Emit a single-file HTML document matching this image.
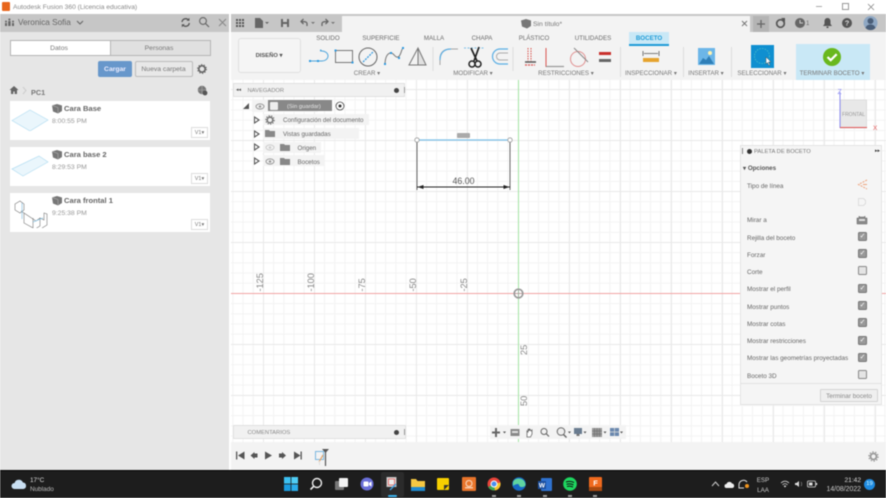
<!DOCTYPE html>
<html lang="es"><head><meta charset="utf-8"><title>Autodesk Fusion 360</title>
<style>
html,body{margin:0;padding:0;width:886px;height:498px;overflow:hidden;background:#fff}
body{font-family:"Liberation Sans",sans-serif;color:#666}
#root{position:absolute;left:0;top:0;width:886px;height:498px;overflow:hidden;filter:blur(.4px)}
.a{position:absolute}
.t{position:absolute;white-space:nowrap;line-height:1}
.c{transform:translateX(-50%)}
.rl{font-size:6.2px;color:#6a6a6a;top:36px}
.ll{font-size:6.2px;color:#777;top:70.5px}
.card{position:absolute;left:10px;width:200px;height:39px;background:#fff}
.card .n{position:absolute;left:54px;top:3px;font-size:7.6px;font-weight:bold;color:#666;white-space:nowrap}
.card .d{position:absolute;left:42px;top:17px;font-size:6.8px;color:#999}
.card .v{position:absolute;left:181px;top:26px;width:15px;height:9px;border:1px solid #ddd;font-size:5.5px;line-height:10px;color:#777;text-align:center}
.cube{position:absolute;left:42px;top:3px}
.tr{position:absolute;background:#f3f3f3;height:11px}
.tri{position:absolute;width:0;height:0;border-left:6px solid #555;border-top:4px solid transparent;border-bottom:4px solid transparent}
.tri:after{content:"";position:absolute;left:-5px;top:-2px;border-left:3px solid #fff;border-top:2px solid transparent;border-bottom:2px solid transparent}
.pl{position:absolute;left:747px;font-size:6.35px;color:#666;white-space:nowrap;line-height:1}
.cb{position:absolute;left:858px;width:7px;height:7px;border:1px solid #777;background:#999;border-radius:1.5px;color:#fff;font-size:7px;line-height:7px;text-align:center}
.cb.o{background:#e4e4e4;border-color:#888}
.grid{position:absolute;left:231px;top:80px;width:655px;height:362px;background-color:#fff;
background-image:linear-gradient(90deg,#e9e9e9 1px,transparent 1px),linear-gradient(#e9e9e9 1px,transparent 1px),linear-gradient(90deg,#f3f3f3 1px,transparent 1px),linear-gradient(#f3f3f3 1px,transparent 1px);
background-size:51px 51px,51px 51px,10.2px 10.2px,10.2px 10.2px;background-position:32px 9px,32px 9px,1.4px 9.2px,1.4px 9.2px}
</style></head><body><div id="root">

<!-- title bar -->
<div class="a" style="left:2px;top:2px;width:8px;height:9px;background:#e8661c;border-radius:1px"></div>
<div class="t" style="left:13px;top:4.5px;font-size:6.7px;color:#888">Autodesk Fusion 360 (Licencia educativa)</div>
<div class="a" style="left:816px;top:6px;width:6px;height:1px;background:#aaa"></div>
<div class="a" style="left:842px;top:3px;width:5px;height:5px;border:1px solid #999"></div>
<svg class="a" style="left:867px;top:3px" width="8" height="8"><path d="M1 1L7 7M7 1L1 7" stroke="#888" stroke-width=".8"/></svg>

<!-- left panel -->
<div class="a" style="left:0;top:14px;width:229px;height:18px;background:#c6c6c6"></div>
<div class="a" style="left:0;top:32px;width:229px;height:438px;background:#e6e6e6"></div>
<div class="a" style="left:229px;top:14px;width:2px;height:456px;background:#fff"></div>
<svg class="a" style="left:4px;top:18px" width="11" height="9"><path d="M1 8V5h2v3zM4.200 8V3h2.400v5zM8 8V5h2v3z" fill="#666"/><circle cx="2" cy="3.500" r="1" fill="#666"/><circle cx="5.400" cy="1.500" r="1.100" fill="#666"/><circle cx="9" cy="3.500" r="1" fill="#666"/></svg>
<div class="t" style="left:18px;top:18.500px;font-size:8.200px;color:#666">Veronica Sofia</div>
<svg class="a" style="left:76px;top:20px" width="8" height="6"><path d="M1 1l3 3 3-3" fill="none" stroke="#666" stroke-width="1.100"/></svg>
<svg class="a" style="left:180px;top:17px" width="11" height="11"><path d="M2 5a3.700 3.700 0 0 1 6.500-2M9.300 6a3.700 3.700 0 0 1-6.500 2" fill="none" stroke="#555" stroke-width="1.300"/><path d="M9.500 .8v3h-3zM1.800 10.200v-3h3z" fill="#555"/></svg>
<svg class="a" style="left:198px;top:16px" width="12" height="12"><circle cx="5" cy="5" r="3.400" fill="none" stroke="#666" stroke-width="1.100"/><path d="M7.500 7.500L11 11" stroke="#666" stroke-width="1.200"/></svg>
<svg class="a" style="left:218px;top:18px" width="9" height="9"><path d="M1 1l7 7M8 1L1 8" stroke="#888" stroke-width="1"/></svg>

<div class="a" style="left:10px;top:40px;width:99px;height:14px;background:#fff;border:1px solid #b5b5b5"></div>
<div class="a" style="left:110px;top:40px;width:99px;height:14px;background:#e0e0e0;border:1px solid #b5b5b5"></div>
<div class="t c" style="left:59px;top:46px;font-size:6.800px;color:#777">Datos</div>
<div class="t c" style="left:159px;top:46px;font-size:6.800px;color:#777">Personas</div>
<div class="a" style="left:98px;top:61px;width:34px;height:16px;background:#6797cb;border-radius:2px"></div>
<div class="t c" style="left:115px;top:67px;font-size:6.800px;color:#eef;font-weight:bold">Cargar</div>
<div class="a" style="left:135px;top:61px;width:56px;height:14px;background:#e8e8e8;border:1px solid #bbb;border-radius:2px"></div>
<div class="t c" style="left:163.500px;top:67px;font-size:6.800px;color:#777">Nueva carpeta</div>
<svg class="a" style="left:197px;top:64px" width="10" height="10"><circle cx="5" cy="5" r="3.200" fill="none" stroke="#666" stroke-width="1.700"/><circle cx="5" cy="5" r="4.400" fill="none" stroke="#666" stroke-width="1" stroke-dasharray="1.300 1.500"/></svg>
<svg class="a" style="left:9px;top:85px" width="10" height="10"><path d="M5 1L.5 5H2v4h2.300V6.500h1.400V9H8V5h1.500z" fill="#666"/></svg>
<svg class="a" style="left:22px;top:86px" width="6" height="9"><path d="M1 1l3 3.500-3 3.500" fill="none" stroke="#ccc"/></svg>
<div class="t" style="left:31px;top:88.500px;font-size:7.300px;font-weight:bold;color:#777">PC1</div>
<svg class="a" style="left:197px;top:85px" width="11" height="11"><circle cx="5" cy="5" r="4.200" fill="#777"/><path d="M5 1v8M1 5h8" stroke="#aaa" stroke-width=".6"/><circle cx="8" cy="8" r="2.400" fill="#555"/></svg>

<div class="card" style="top:101px">
 <svg style="position:absolute;left:1px;top:6px" width="38" height="24"><path d="M1 13.500L19 3l18 10-18 11z" fill="#eaf6fc" stroke="#b5def2" stroke-width=".7"/></svg>
 <svg class="cube" width="11" height="10"><path d="M0 1.500L5 0l5 1.500V7L6 9.500 1 7.500z" fill="#777"/><path d="M0 1.500L6 3.500v6" fill="none" stroke="#bbb" stroke-width=".5"/></svg><div class="n">Cara Base</div><div class="d">8:00:55 PM</div><div class="v">V1▾</div>
</div>
<div class="card" style="top:147px">
 <svg style="position:absolute;left:1px;top:6px" width="38" height="24"><path d="M1 16L28 3l9 6-25 14z" fill="#eaf6fc" stroke="#b5def2" stroke-width=".7"/></svg>
 <svg class="cube" width="11" height="10"><path d="M0 1.500L5 0l5 1.500V7L6 9.500 1 7.500z" fill="#777"/><path d="M0 1.500L6 3.500v6" fill="none" stroke="#bbb" stroke-width=".5"/></svg><div class="n">Cara base 2</div><div class="d">8:29:53 PM</div><div class="v">V1▾</div>
</div>
<div class="card" style="top:193px">
 <svg style="position:absolute;left:3px;top:5px" width="36" height="30"><path d="M2 6l5-3 4 3v6l-4 3-5-3zM8 13l3 2v10l11 6 5-3V20l4 2v-7l3 1v11l-5 3M11 15l12 8 4-3M20 20v10" fill="none" stroke="#777" stroke-width=".6"/><path d="M9 5v16M20 24l10-4" fill="none" stroke="#8cc4e4" stroke-width=".7"/></svg>
 <svg class="cube" width="11" height="10"><path d="M0 1.500L5 0l5 1.500V7L6 9.500 1 7.500z" fill="#777"/><path d="M0 1.500L6 3.500v6" fill="none" stroke="#bbb" stroke-width=".5"/></svg><div class="n">Cara frontal 1</div><div class="d">9:25:38 PM</div><div class="v">V1▾</div>
</div>

<!-- top bar -->
<div class="a" style="left:231px;top:14px;width:655px;height:2px;background:#c6c6c6"></div>
<div class="a" style="left:231px;top:15px;width:111px;height:17px;background:#c6c6c6"></div>
<div class="a" style="left:750px;top:15px;width:136px;height:17px;background:#c6c6c6"></div>
<div class="a" style="left:342px;top:16px;width:408px;height:17px;background:#f3f3f3"></div>
<div class="a" style="left:231px;top:32px;width:655px;height:48px;background:#f3f3f3"></div>
<svg class="a" style="left:235px;top:18px" width="10" height="10"><path d="M1 1h2v2H1zM4 1h2v2H4zM7 1h2v2H7zM1 4h2v2H1zM4 4h2v2H4zM7 4h2v2H7zM1 7h2v2H1zM4 7h2v2H4zM7 7h2v2H7z" fill="#555"/></svg>
<svg class="a" style="left:254px;top:17px" width="16" height="12"><path d="M1 1h5l3 3v7H1z" fill="#666"/><path d="M11 5h4l-2 2z" fill="#666"/></svg>
<svg class="a" style="left:280px;top:18px" width="10" height="10"><path d="M1 1h8v8H1z" fill="#666"/><path d="M3 1h4v3H3zM3 6h4v3H3z" fill="#ccc"/></svg>
<svg class="a" style="left:299px;top:18px" width="16" height="10"><path d="M8 8V5.500C8 4 6 3.500 3 3.500M4.500 1L2 3.500 4.500 6" fill="none" stroke="#666" stroke-width="1.300"/><path d="M12 4h4l-2 2z" fill="#777"/></svg>
<svg class="a" style="left:320px;top:18px" width="16" height="10"><path d="M2 8V5.500C2 4 4 3.500 7 3.500M5.500 1L8 3.500 5.500 6" fill="none" stroke="#666" stroke-width="1.300"/><path d="M11 4h4l-2 2z" fill="#777"/></svg>
<svg class="a" style="left:521px;top:19px" width="11" height="10"><path d="M0 1.500L5 0l5 1.500V7L6 9.500 1 7.500z" fill="#777"/></svg>
<div class="t" style="left:533px;top:21.500px;font-size:6.800px;color:#777">Sin título*</div>
<svg class="a" style="left:741px;top:20px" width="7" height="7"><path d="M1 1l5 5M6 1L1 6" stroke="#777"/></svg>
<div class="a" style="left:753px;top:16px;width:16px;height:16px;background:#b4b4b4"></div>
<svg class="a" style="left:756px;top:19px" width="10" height="10"><path d="M5 1v8M1 5h8" stroke="#666" stroke-width="1.300"/></svg>
<svg class="a" style="left:775px;top:18px" width="11" height="11"><circle cx="5.500" cy="5.500" r="3.800" fill="none" stroke="#555" stroke-width="1.700"/><path d="M6 0h4v4z" fill="#555"/></svg>
<svg class="a" style="left:794px;top:17px" width="12" height="12"><circle cx="6" cy="6" r="5" fill="#666"/><path d="M6 3v3h3" fill="none" stroke="#ccc"/></svg>
<div class="t" style="left:806px;top:21px;font-size:6px;color:#666">1</div>
<svg class="a" style="left:822px;top:17px" width="11" height="12"><path d="M5.500 1c2 0 3 1.500 3 3.500V7l1.500 2H1l1.500-2V4.500C2.500 2.500 3.500 1 5.500 1z" fill="#555"/><rect x="4.500" y="9.500" width="2" height="1.500" fill="#555"/></svg>
<svg class="a" style="left:841px;top:17px" width="12" height="12"><circle cx="6" cy="6" r="5" fill="#555"/><text x="6" y="8.500" font-size="7.500" font-weight="bold" fill="#ddd" text-anchor="middle" font-family="Liberation Sans">?</text></svg>
<svg class="a" style="left:863px;top:15px" width="15" height="16"><circle cx="7.500" cy="8" r="7" fill="#8fa8c4"/><circle cx="7.500" cy="6" r="3" fill="#4a5e78"/><path d="M2.500 13c1-3 3-3.500 5-3.500s4 .5 5 3.500a7 7 0 0 1-10 0z" fill="#4a5e78"/></svg>

<!-- tabs -->
<div class="t c rl" style="left:328px">SOLIDO</div>
<div class="t c rl" style="left:381px">SUPERFICIE</div>
<div class="t c rl" style="left:434px">MALLA</div>
<div class="t c rl" style="left:482px">CHAPA</div>
<div class="t c rl" style="left:534px">PLÁSTICO</div>
<div class="t c rl" style="left:593px">UTILIDADES</div>
<div class="a" style="left:629px;top:32px;width:40px;height:14px;background:#c9e8f6;border-bottom:2px solid #1e9bd7;box-sizing:border-box"></div>
<div class="t c rl" style="left:649px;color:#1e9bd7;font-weight:bold">BOCETO</div>

<!-- Design box -->
<div class="a" style="left:238px;top:38px;width:61px;height:33px;background:#f5f5f5;border:1px solid #e0e0e0;border-radius:3px"></div>
<div class="t c" style="left:269px;top:53.500px;font-size:5.800px;font-weight:bold;color:#555">DISEÑO ▾</div>

<!-- Ribbon icons -->
<svg class="a" style="left:306px;top:44px" width="316" height="30" fill="none">
 <path d="M4 17H16c3 0 6-2 6-5s-3-5-6-5h-1" stroke="#4da5dc" stroke-width="1"/>
 <path d="M14 6.500h1.500" stroke="#4da5dc" stroke-width="1.800"/><rect x="3" y="16" width="2" height="2" fill="#2f9ae0"/><rect x="11" y="16" width="2" height="2" fill="#2f9ae0"/>
 <rect x="29.500" y="6.500" width="17" height="12" stroke="#777" stroke-width="1"/>
 <rect x="28.500" y="5.500" width="2" height="2" fill="#2f9ae0"/><rect x="45.500" y="17.500" width="2" height="2" fill="#2f9ae0"/>
 <circle cx="62" cy="13" r="9" stroke="#666" stroke-width="1"/>
 <path d="M57 18l10-10" stroke="#3f9fe0" stroke-width="1.300" stroke-dasharray="2 1"/>
 <path d="M79 21c0-9 3-12 6-12s4 5 7 4 3-7 5-9" stroke="#777" stroke-width="1"/>
 <rect x="78" y="19" width="2" height="2" fill="#2f9ae0"/><rect x="84" y="8" width="2" height="2" fill="#2f9ae0"/><rect x="92" y="13" width="2" height="2" fill="#2f9ae0"/><rect x="96" y="3" width="2" height="2" fill="#2f9ae0"/>
 <path d="M112 4l8 17h-8z" fill="#e0e0e0"/>
 <path d="M103 21L112 4l8 17zM112 4v17" stroke="#777" stroke-width="1"/>
 <path d="M127 3v24" stroke="#ddd"/>
 <path d="M134 21v-6c0-7 4-10 11-10h7" stroke="#a5a5a5" stroke-width="1"/>
 <path d="M134 16c0-7 4-11 11-11" stroke="#5aaee4" stroke-width="1.200"/>
 <path d="M158 4h20" stroke="#7cc0e8" stroke-width="1" stroke-dasharray="2 1.500"/>
 <path d="M165 4l6 13M173 3l-5 14" stroke="#222" stroke-width="1.700"/>
 <circle cx="166" cy="20" r="3" stroke="#222" stroke-width="1.500"/><circle cx="172" cy="20" r="3" stroke="#222" stroke-width="1.500"/>
 <path d="M202 5h-8a7.500 7.500 0 0 0 0 15h8" stroke="#5aaee4" stroke-width="1.200"/>
 <path d="M202 9h-8a3.500 3.500 0 0 0 0 7h8" stroke="#aaa" stroke-width="1"/>
 <path d="M207 3v24" stroke="#ddd"/>
 <path d="M222 4v13M225 4v13" stroke="#d9534f" stroke-width="1" stroke-dasharray="1.500 1"/>
 <path d="M219 18h11" stroke="#555" stroke-width="1.500"/>
 <path d="M219 21h10" stroke="#d9534f" stroke-width="1.200" stroke-dasharray="2 1"/>
 <path d="M240 4v19" stroke="#d9534f" stroke-width="1"/><path d="M240 22.500h18" stroke="#999" stroke-width="1.300"/>
 <circle cx="272" cy="15" r="7.500" stroke="#e08f8f" stroke-width="1"/><path d="M268 4l14 14" stroke="#888" stroke-width="1"/>
 <rect x="293" y="8" width="12" height="3" fill="#c9302c"/><rect x="293" y="15" width="12" height="3" fill="#666"/>
</svg>
<div class="a" style="left:619.500px;top:47px;width:1px;height:30px;background:#ddd"></div>
<div class="a" style="left:682.500px;top:47px;width:1px;height:30px;background:#ddd"></div>
<div class="a" style="left:730.500px;top:47px;width:1px;height:30px;background:#ddd"></div>
<svg class="a" style="left:642px;top:50px" width="18" height="13" fill="none"><path d="M1 1v5M17 1v5M2 3.500h14" stroke="#555" stroke-width=".8"/><rect x="1" y="8" width="16" height="4" fill="#e6a32e"/></svg>
<svg class="a" style="left:698px;top:48px" width="18" height="17"><rect width="17" height="17" fill="#6cb6e8"/><path d="M1 16l4-6 3 2 3-4 5 8z" fill="#2f7fb8"/><circle cx="12" cy="5" r="2" fill="#fff2b0"/></svg>
<div class="a" style="left:751px;top:45px;width:23px;height:23px;background:#0f8fd0"></div>
<svg class="a" style="left:751px;top:45px" width="23" height="23" fill="none"><circle cx="11" cy="11" r="7.500" stroke="#4cc0c8" stroke-dasharray="1.500 1.200" stroke-width=".8"/><path d="M15 12v7l1.500-1.500 1.500 3 1-.5-1.500-3H20z" fill="#fff" stroke="#333" stroke-width=".4"/></svg>
<div class="a" style="left:796px;top:44px;width:74px;height:36px;background:#c9e8f6"></div>
<svg class="a" style="left:823px;top:48px" width="18" height="18"><circle cx="9" cy="9" r="9" fill="#69b81e"/><path d="M4.500 9l3.200 3.200 6-6" fill="none" stroke="#fff" stroke-width="2.200"/></svg>

<div class="t c ll" style="left:367px">CREAR ▾</div>
<div class="t c ll" style="left:473px">MODIFICAR ▾</div>
<div class="t c ll" style="left:566px">RESTRICCIONES ▾</div>
<div class="t c ll" style="left:651px">INSPECCIONAR ▾</div>
<div class="t c ll" style="left:706px">INSERTAR ▾</div>
<div class="t c ll" style="left:762px">SELECCIONAR ▾</div>
<div class="t c ll" style="left:832px">TERMINAR BOCETO ▾</div>

<!-- canvas grid -->
<div class="grid"></div>
<div class="a" style="left:231px;top:293px;width:655px;height:1px;background:#f2a4a4"></div>
<div class="a" style="left:518px;top:80px;width:1px;height:362px;background:#a6e6a6"></div>
<svg class="a" style="left:513px;top:288px" width="11" height="11"><circle cx="5.500" cy="5.500" r="4.300" fill="none" stroke="#999" stroke-width="1.700"/><path d="M5.500 1v9M1 5.500h9" stroke="#999" stroke-width=".6"/></svg>

<!-- axis labels -->
<svg class="a" style="left:231px;top:230px" width="320" height="190" font-family="Liberation Sans" font-size="9.200" fill="#888">
 <text transform="translate(32 61.500) rotate(-90)">-125</text>
 <text transform="translate(83 61.500) rotate(-90)">-100</text>
 <text transform="translate(134 61.500) rotate(-90)">-75</text>
 <text transform="translate(185 61.500) rotate(-90)">-50</text>
 <text transform="translate(236 61.500) rotate(-90)">-25</text>
 <text transform="translate(296 125) rotate(-90)">25</text>
 <text transform="translate(296 176) rotate(-90)">50</text>
</svg>

<!-- sketch -->
<svg class="a" style="left:400px;top:125px" width="125" height="75" fill="none">
 <path d="M17 15h93" stroke="#7cc0e8" stroke-width="1.200"/>
 <path d="M17 15v50M110 15v50" stroke="#666" stroke-width="1"/>
 <path d="M17 62h93" stroke="#222" stroke-width="1"/>
 <path d="M17.500 62l6-2v4zM109.500 62l-6-2v4z" fill="#222"/>
 <circle cx="17" cy="15" r="2.200" fill="#fff" stroke="#999" stroke-width=".8"/>
 <circle cx="110" cy="15" r="2.200" fill="#fff" stroke="#999" stroke-width=".8"/>
 <rect x="57" y="8" width="13" height="5" rx="1" fill="#aaa"/>
 <text x="63.500" y="59" font-size="8.800" fill="#555" text-anchor="middle" font-family="Liberation Sans">46.00</text>
</svg>

<!-- navigator -->
<div class="a" style="left:233px;top:83px;width:172px;height:14px;background:#f1f1f1;border:1px solid #e0e0e0;box-sizing:border-box"></div>
<div class="t" style="left:236px;top:88px;font-size:5px;color:#555">◂◂</div>
<div class="t" style="left:247.500px;top:88.500px;font-size:5.800px;color:#888">NAVEGADOR</div>
<div class="a" style="left:394px;top:88px;width:5px;height:5px;border-radius:50%;background:#444"></div>
<div class="a" style="left:404px;top:87px;width:1px;height:6px;background:#999"></div>
<svg class="a" style="left:242px;top:102px" width="8" height="8"><path d="M7 1v6H1z" fill="#555"/></svg>
<div class="a" style="left:252px;top:100px;width:66px;height:12px;background:#f3f3f3"></div>
<svg class="a" style="left:255px;top:103px" width="10" height="7"><ellipse cx="5" cy="3.500" rx="4" ry="2.600" fill="none" stroke="#999"/><circle cx="5" cy="3.500" r="1.300" fill="#999"/></svg>
<div class="a" style="left:268px;top:100px;width:64px;height:11px;background:#888"></div>
<div class="a" style="left:270px;top:101.500px;width:8px;height:8px;background:#eee;border-radius:1px"></div>
<div class="t" style="left:287px;top:105px;font-size:5.800px;color:#e8e8e8">(Sin guardar)</div>
<svg class="a" style="left:335px;top:101px" width="10" height="10"><circle cx="5" cy="5" r="4" fill="#fff" stroke="#444" stroke-width=".8"/><circle cx="5" cy="5" r="1.500" fill="#333"/></svg>

<div class="tr" style="left:263px;top:114px;width:106px"></div>
<div class="tr" style="left:263px;top:128px;width:96px"></div>
<div class="tr" style="left:263px;top:142px;width:58px"></div>
<div class="tr" style="left:263px;top:155px;width:62px"></div>
<div class="tri" style="left:254px;top:116px"></div>
<div class="tri" style="left:254px;top:130px"></div>
<div class="tri" style="left:254px;top:143px"></div>
<div class="tri" style="left:254px;top:157px"></div>
<svg class="a" style="left:265px;top:115px" width="10" height="10"><circle cx="5" cy="5" r="2.800" fill="none" stroke="#777" stroke-width="1.600"/><circle cx="5" cy="5" r="4.200" fill="none" stroke="#777" stroke-width="1.100" stroke-dasharray="1.300 1.300"/></svg>
<svg class="a" style="left:265px;top:129px" width="10" height="9"><path d="M0 1h4l1 1h5v6H0z" fill="#888"/></svg>
<svg class="a" style="left:265px;top:144px" width="10" height="7"><ellipse cx="5" cy="3.500" rx="4" ry="2.600" fill="none" stroke="#ccc"/><circle cx="5" cy="3.500" r="1.300" fill="#ccc"/></svg>
<svg class="a" style="left:280px;top:143px" width="10" height="9"><path d="M0 1h4l1 1h5v6H0z" fill="#888"/></svg>
<svg class="a" style="left:265px;top:158px" width="10" height="7"><ellipse cx="5" cy="3.500" rx="4" ry="2.600" fill="none" stroke="#999"/><circle cx="5" cy="3.500" r="1.300" fill="#999"/></svg>
<svg class="a" style="left:280px;top:157px" width="10" height="9"><path d="M0 1h4l1 1h5v6H0z" fill="#888"/></svg>
<div class="t" style="left:283px;top:118px;font-size:6.200px;color:#666">Configuración del documento</div>
<div class="t" style="left:283px;top:132px;font-size:6.200px;color:#666">Vistas guardadas</div>
<div class="t" style="left:297.500px;top:146px;font-size:6.200px;color:#666">Origen</div>
<div class="t" style="left:297.500px;top:159.500px;font-size:6.200px;color:#666">Bocetos</div>

<!-- view cube -->
<svg class="a" style="left:832px;top:85px" width="54" height="50" font-family="Liberation Sans">
 <rect x="8.500" y="15" width="26" height="28" fill="#e8e8e8" stroke="#ddd"/>
 <path d="M8 43V7" stroke="#8c8cf0" stroke-width="1"/><path d="M8 42.500h27" stroke="#e45a5a" stroke-width="1"/>
 <text x="5.500" y="9" font-size="7" fill="#8c8cf0">Z</text>
 <text x="41" y="45" font-size="6.500" fill="#e45a5a">X</text>
 <text x="21.500" y="31" font-size="5" fill="#999" text-anchor="middle">FRONTAL</text>
</svg>

<!-- palette -->
<div class="a" style="left:740px;top:145px;width:142px;height:260px;background:#f5f5f5;border:1px solid #e4e4e4;box-sizing:border-box"></div>
<div class="a" style="left:741.500px;top:148px;width:1px;height:6px;background:#888"></div>
<div class="a" style="left:747px;top:149px;width:5px;height:5px;background:#333;border-radius:50%"></div>
<div class="t" style="left:754px;top:149.500px;font-size:5.800px;color:#777">PALETA DE BOCETO</div>
<div class="t" style="left:875px;top:149px;font-size:5px;color:#333">▸▸</div>
<div class="t" style="left:743px;top:166px;font-size:6.200px;color:#555;font-weight:bold">▾ Opciones</div>
<div class="pl" style="top:183.500px">Tipo de línea</div>
<div class="pl" style="top:217.500px">Mirar a</div>
<div class="pl" style="top:235.500px">Rejilla del boceto</div>
<div class="pl" style="top:252.500px">Forzar</div>
<div class="pl" style="top:269.500px">Corte</div>
<div class="pl" style="top:286.500px">Mostrar el perfil</div>
<div class="pl" style="top:304.500px">Mostrar puntos</div>
<div class="pl" style="top:321.500px">Mostrar cotas</div>
<div class="pl" style="top:338.500px">Mostrar restricciones</div>
<div class="pl" style="top:356px">Mostrar las geometrías proyectadas</div>
<div class="pl" style="top:373.500px">Boceto 3D</div>
<svg class="a" style="left:857px;top:179px" width="11" height="12" fill="none"><path d="M10 1L1.500 5.500 10 10" stroke="#eea27a" stroke-dasharray="2 1" stroke-width="1"/><path d="M6 5.500h4" stroke="#eea27a"/></svg>
<svg class="a" style="left:857px;top:197px" width="10" height="10" fill="none"><path d="M1.500 1.500h5l2 2v3l-2 2h-5z" stroke="#ddd"/></svg>
<svg class="a" style="left:856px;top:214px" width="12" height="11"><path d="M1 4h2V2l1 1h4l1-1v2h2v6H1z" fill="#888" stroke="#666" stroke-width=".5"/><rect x="3" y="5" width="6" height="2" fill="#ddd"/></svg>
<div class="cb" style="top:232px">✓</div>
<div class="cb" style="top:249px">✓</div>
<div class="cb o" style="top:266px"></div>
<div class="cb" style="top:284px">✓</div>
<div class="cb" style="top:301px">✓</div>
<div class="cb" style="top:318px">✓</div>
<div class="cb" style="top:336px">✓</div>
<div class="cb" style="top:353px">✓</div>
<div class="cb o" style="top:370px"></div>
<div class="a" style="left:741px;top:383px;width:140px;height:1px;background:#e2e2e2"></div>
<div class="a" style="left:820px;top:389px;width:56px;height:11px;background:#efefef;border:1px solid #d4d4d4;border-radius:1px"></div>
<div class="t c" style="left:849px;top:393.500px;font-size:6.400px;color:#888">Terminar boceto</div>

<!-- comments -->
<div class="a" style="left:233px;top:425px;width:173px;height:14px;background:#f1f1f1;border:1px solid #e0e0e0;box-sizing:border-box"></div>
<div class="t" style="left:247.500px;top:431px;font-size:5.800px;color:#888">COMENTARIOS</div>
<div class="a" style="left:394px;top:429.500px;width:5px;height:5px;border-radius:50%;background:#444"></div>
<div class="a" style="left:404px;top:429px;width:1px;height:6px;background:#999"></div>

<!-- nav bar -->
<div class="a" style="left:490px;top:425px;width:136px;height:14px;background:#f3f3f3"></div>
<svg class="a" style="left:490px;top:425px" width="136" height="14">
 <path d="M6 3v9M2 7.500h8" stroke="#666" stroke-width="2"/><path d="M13 6.500h3l-1.500 2z" fill="#555"/>
 <rect x="20.500" y="4" width="9" height="7" fill="#888"/><rect x="22" y="6" width="6" height="2" fill="#ddd"/>
 <path d="M37 12V6l1 1V4l1 2V3.500l1 2V4l1 2 1-1v4l-1.500 3z" fill="#fff" stroke="#666" stroke-width=".8"/>
 <circle cx="54" cy="6.500" r="3" fill="none" stroke="#666"/><path d="M56 8.500l3 3" stroke="#666" stroke-width="1.200"/>
 <circle cx="71" cy="6.500" r="3.800" fill="#eee" stroke="#666"/><path d="M73.500 9.500l3 3" stroke="#666" stroke-width="1.400"/><path d="M78 6.500h3l-1.500 2z" fill="#555"/>
 <rect x="84" y="3" width="8" height="6" fill="#6a7c90"/><rect x="86.500" y="9" width="3" height="2" fill="#777"/><path d="M93.500 6.500h3l-1.500 2z" fill="#555"/>
 <rect x="102" y="3" width="10" height="9" fill="#999"/><path d="M104.500 3v9M107 3v9M109.500 3v9M102 6h10M102 9h10" stroke="#666" stroke-width=".5"/><path d="M113.500 6.500h3l-1.500 2z" fill="#555"/>
 <rect x="120" y="3" width="9" height="8" fill="#6a88ae"/><path d="M124.500 3v8M120 7h9" stroke="#ddd" stroke-width=".7"/><path d="M130 6.500h3l-1.500 2z" fill="#555"/>
</svg>

<!-- timeline -->
<div class="a" style="left:231px;top:442px;width:655px;height:28px;background:#f3f3f3"></div>
<svg class="a" style="left:235px;top:450px" width="70" height="12" fill="#555">
 <path d="M1 1.500h1.300v8H1zM9.500 1.500v8L3 5.500z"/>
 <path d="M15.500 5.500l4-3.500v7zM19.500 3.500h3v4h-3z"/>
 <path d="M30 1.500l7 4-7 4z"/>
 <path d="M44 3.500h3V2l4 3.500-4 3.500V7.500h-3z"/>
 <path d="M59 1.500l6.500 4-6.500 4zM65.500 1.500h1.300v8h-1.300z"/>
</svg>
<svg class="a" style="left:314px;top:447px" width="18" height="20" fill="none">
 <rect x="1.500" y="4.500" width="8" height="8" stroke="#7cb8e0" stroke-width="1"/>
 <path d="M5 15l4-7" stroke="#e6a060" stroke-width="1.200"/>
 <path d="M8 2h7l-3.500 4z" fill="#555"/><path d="M11.500 4v15" stroke="#555" stroke-width="1.200"/>
 <path d="M5.500 14v4" stroke="#ddd"/>
</svg>
<svg class="a" style="left:868px;top:451px" width="11" height="11"><circle cx="5.500" cy="5.500" r="3" fill="none" stroke="#999" stroke-width="1.800"/><circle cx="5.500" cy="5.500" r="4.600" fill="none" stroke="#999" stroke-width="1.200" stroke-dasharray="1.400 1.500"/></svg>

<!-- taskbar -->
<div class="a" style="left:0;top:470px;width:886px;height:1px;background:#000"></div>
<div class="a" style="left:0;top:471px;width:886px;height:27px;background:#1d1d1d"></div>
<svg class="a" style="left:11px;top:478px" width="16" height="12"><path d="M3.500 11a3 3 0 0 1 0-6 4.500 4.500 0 0 1 8.500-.5A3.300 3.300 0 0 1 12.500 11z" fill="#c9dff2"/></svg>
<div class="t" style="left:30px;top:478px;font-size:6.400px;color:#ddd">17°C</div>
<div class="t" style="left:30px;top:487px;font-size:6.400px;color:#bbb">Nublado</div>

<svg class="a" style="left:284px;top:477px" width="14" height="14"><rect width="6.600" height="6.600" fill="#3cc1f2"/><rect x="7.400" width="6.600" height="6.600" fill="#4fcdf5"/><rect y="7.400" width="6.600" height="6.600" fill="#1a9ce0"/><rect x="7.400" y="7.400" width="6.600" height="6.600" fill="#2badeb"/></svg>
<svg class="a" style="left:309px;top:477px" width="14" height="14" fill="none"><circle cx="8" cy="6" r="4.500" stroke="#eee" stroke-width="1.400"/><path d="M4.500 9.500L1.500 12.500" stroke="#eee" stroke-width="1.600"/></svg>
<svg class="a" style="left:335px;top:477px" width="14" height="14"><rect x="0" y="4" width="9" height="9" rx="1" fill="#777"/><rect x="4" y="1" width="9" height="9" rx="1" fill="#f2f2f2"/></svg>
<svg class="a" style="left:360px;top:477px" width="14" height="14"><circle cx="7" cy="7" r="6.500" fill="#6a6fd8"/><rect x="3.500" y="4.500" width="5" height="5" rx="1" fill="#fff"/><path d="M9 6l2.500-1.500v5L9 8z" fill="#fff"/></svg>
<div class="a" style="left:381px;top:472px;width:23px;height:25px;background:#2b2b2b;border-radius:2px"></div>
<svg class="a" style="left:386px;top:477px" width="14" height="15" fill="none"><rect x="1" y=".5" width="9" height="9" fill="#eee" stroke="#bbb"/><rect x="2.500" y="2" width="6" height="6" stroke="#d9534f" stroke-width=".8"/><path d="M4 13l6-6" stroke="#3f9fe0" stroke-width="1.300"/></svg>
<div class="a" style="left:388px;top:494.500px;width:9px;height:2px;background:#3cb4f0;border-radius:1px"></div>
<svg class="a" style="left:411px;top:478px" width="14" height="13"><path d="M0 1h5l1.500 2H14v10H0z" fill="#f5c842"/><rect y="9" width="14" height="4" fill="#1f8ad0"/></svg>
<svg class="a" style="left:437px;top:478px" width="12" height="12"><rect width="12" height="12" rx="1" fill="#f7d000"/><path d="M7 12l5-5H7z" fill="#333"/></svg>
<svg class="a" style="left:462px;top:477px" width="14" height="14"><rect width="14" height="14" rx="1" fill="#e8742a"/><circle cx="7" cy="6.500" r="3" fill="none" stroke="#f7c9a8" stroke-width="1.300"/><rect x="3" y="10" width="8" height="1.500" fill="#f7c9a8"/></svg>
<svg class="a" style="left:487px;top:477px" width="14" height="14"><circle cx="7" cy="7" r="6.500" fill="#e8443a"/><path d="M7 7L1.200 10A6.500 6.500 0 0 0 8 13.400z" fill="#3aa757"/><path d="M7 7l1 6.400A6.500 6.500 0 0 0 13.400 5.500z" fill="#f7c52e"/><circle cx="7" cy="7" r="3" fill="#4a8ef0" stroke="#fff"/></svg>
<svg class="a" style="left:512px;top:477px" width="14" height="14"><circle cx="7" cy="7" r="6.800" fill="#1668c4"/><path d="M1 5c2-5 11-5 12.500 2 .3 2-1.500 3-4 3-3 0-2-3-3.500-3-2 0-4 1-5 2z" fill="#5fd4a0"/></svg>
<svg class="a" style="left:538px;top:478px" width="14" height="13"><rect x="3" y="0" width="11" height="13" rx="1" fill="#2f72d0"/><rect x="0" y="3" width="8" height="8" fill="#1c4f9e"/><text x="4" y="9.500" font-size="6.500" font-weight="bold" fill="#fff" text-anchor="middle" font-family="Liberation Sans">W</text></svg>
<svg class="a" style="left:563px;top:477px" width="14" height="14" fill="none"><circle cx="7" cy="7" r="6.800" fill="#1ed760"/><path d="M3 5c3-1 6-.7 8 .6M3.500 7.300c2.500-.8 5-.5 7 .6M4 9.500c2-.6 4-.4 6 .5" stroke="#111" stroke-width="1"/></svg>
<svg class="a" style="left:589px;top:477px" width="13" height="14"><rect width="13" height="14" rx="1" fill="#f06a1e"/><rect y="10" width="13" height="4" fill="#a84a10"/><text x="6.500" y="8.500" font-size="7.500" font-weight="bold" fill="#fff" text-anchor="middle" font-family="Liberation Sans">F</text></svg>
<div class="a" style="left:492px;top:495px;width:4px;height:1.500px;background:#999"></div>
<div class="a" style="left:517px;top:495px;width:4px;height:1.500px;background:#999"></div>
<div class="a" style="left:543px;top:495px;width:4px;height:1.500px;background:#999"></div>
<div class="a" style="left:568px;top:495px;width:4px;height:1.500px;background:#999"></div>
<div class="a" style="left:593px;top:495px;width:4px;height:1.500px;background:#999"></div>

<svg class="a" style="left:711px;top:481px" width="9" height="6" fill="none"><path d="M1 5l3.500-4L8 5" stroke="#ccc"/></svg>
<svg class="a" style="left:724px;top:481px" width="11" height="7"><path d="M2.500 7a2 2 0 0 1 0-4 3 3 0 0 1 5.500-.5A2.300 2.300 0 0 1 8.500 7z" fill="#eee"/></svg>
<svg class="a" style="left:737px;top:477px" width="13" height="13" fill="none"><path d="M2 8a4.500 4.500 0 0 1 8-3" stroke="#ddd" stroke-width="1"/><path d="M2 8v3h5" stroke="#ddd"/><circle cx="10" cy="9" r="2" fill="#f0951e"/></svg>
<div class="t c" style="left:763px;top:478px;font-size:6.200px;color:#ccc">ESP</div>
<div class="t c" style="left:763px;top:487.500px;font-size:6.200px;color:#ccc">LAA</div>
<svg class="a" style="left:780px;top:480px" width="10" height="8" fill="none"><path d="M1 3c2.500-2.500 5.500-2.500 8 0M2.500 4.800c1.600-1.500 3.400-1.500 5 0" stroke="#ddd" stroke-width=".8"/><path d="M5 7.500L3.700 6c.8-.6 1.800-.6 2.600 0z" fill="#ddd"/></svg>
<svg class="a" style="left:794px;top:480px" width="10" height="8"><path d="M1 3h1.500L5 1v6L2.500 5H1z" fill="#ddd"/><path d="M7 2c1 1 1 3 0 4" stroke="#888" fill="none" stroke-width=".7"/></svg>
<svg class="a" style="left:807px;top:480px" width="11" height="8"><rect x=".5" y="1" width="8" height="6" rx="1" fill="none" stroke="#ddd" stroke-width=".8"/><rect x="2" y="2.500" width="3.500" height="3" fill="#ddd"/><rect x="9" y="3" width="1.200" height="2" fill="#ddd"/></svg>
<div class="t" style="right:25px;top:477.500px;font-size:6.600px;color:#ddd">21:42</div>
<div class="t" style="right:25px;top:487px;font-size:6.900px;color:#ccc">14/08/2022</div>
<div class="a" style="left:864px;top:479px;width:11px;height:11px;border-radius:50%;background:#1f8ae0;color:#dff;font-size:5.800px;line-height:11px;text-align:center">19</div>

</div></body></html>
